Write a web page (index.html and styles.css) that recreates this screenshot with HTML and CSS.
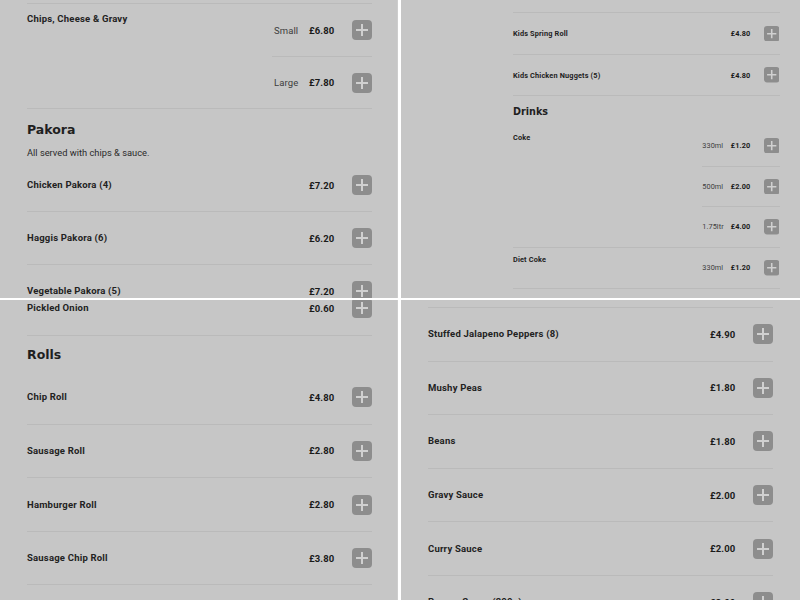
FILE: index.html
```html
<!DOCTYPE html>
<html lang="en">
<head>
<meta charset="utf-8">
<title>Menu</title>
<link rel="stylesheet" href="styles.css">
</head>
<body>
<div class="board">

  <!-- top left -->
  <section class="tile tile--left">
    <div class="menu menu--tl">
      <div class="item item--first item--multi">
        <div class="item__name">Chips, Cheese &amp; Gravy</div>
        <div class="variants">
          <div class="variant"><span class="variant__label">Small</span><span class="price">£6.80</span><button class="add" aria-label="Add"><svg viewBox="0 0 20 20"><rect width="20" height="20" rx="4"/><path d="M10 4v12M4 10h12"/></svg></button></div>
          <div class="variant"><span class="variant__label">Large</span><span class="price">£7.80</span><button class="add" aria-label="Add"><svg viewBox="0 0 20 20"><rect width="20" height="20" rx="4"/><path d="M10 4v12M4 10h12"/></svg></button></div>
        </div>
      </div>
      <div class="section">
        <h2 class="section__title">Pakora</h2>
        <p class="section__desc">All served with chips &amp; sauce.</p>
      </div>
      <div class="item">
        <div class="item__name">Chicken Pakora (4)</div>
        <div class="variants"><div class="variant"><span class="variant__label"></span><span class="price">£7.20</span><button class="add" aria-label="Add"><svg viewBox="0 0 20 20"><rect width="20" height="20" rx="4"/><path d="M10 4v12M4 10h12"/></svg></button></div></div>
      </div>
      <div class="item">
        <div class="item__name">Haggis Pakora (6)</div>
        <div class="variants"><div class="variant"><span class="variant__label"></span><span class="price">£6.20</span><button class="add" aria-label="Add"><svg viewBox="0 0 20 20"><rect width="20" height="20" rx="4"/><path d="M10 4v12M4 10h12"/></svg></button></div></div>
      </div>
      <div class="item">
        <div class="item__name">Vegetable Pakora (5)</div>
        <div class="variants"><div class="variant"><span class="variant__label"></span><span class="price">£7.20</span><button class="add" aria-label="Add"><svg viewBox="0 0 20 20"><rect width="20" height="20" rx="4"/><path d="M10 4v12M4 10h12"/></svg></button></div></div>
      </div>
    </div>
  </section>

  <!-- top right -->
  <section class="tile tile--right">
    <div class="menu menu--tr">
      <div class="item item--first">
        <div class="item__name">Kids Spring Roll</div>
        <div class="variants"><div class="variant"><span class="variant__label"></span><span class="price">£4.80</span><button class="add" aria-label="Add"><svg viewBox="0 0 20 20"><rect width="20" height="20" rx="4"/><path d="M10 4v12M4 10h12"/></svg></button></div></div>
      </div>
      <div class="item">
        <div class="item__name">Kids Chicken Nuggets (5)</div>
        <div class="variants"><div class="variant"><span class="variant__label"></span><span class="price">£4.80</span><button class="add" aria-label="Add"><svg viewBox="0 0 20 20"><rect width="20" height="20" rx="4"/><path d="M10 4v12M4 10h12"/></svg></button></div></div>
      </div>
      <div class="section">
        <h2 class="section__title">Drinks</h2>
      </div>
      <div class="item item--multi">
        <div class="item__name">Coke</div>
        <div class="variants">
          <div class="variant"><span class="variant__label">330ml</span><span class="price">£1.20</span><button class="add" aria-label="Add"><svg viewBox="0 0 20 20"><rect width="20" height="20" rx="4"/><path d="M10 4v12M4 10h12"/></svg></button></div>
          <div class="variant"><span class="variant__label">500ml</span><span class="price">£2.00</span><button class="add" aria-label="Add"><svg viewBox="0 0 20 20"><rect width="20" height="20" rx="4"/><path d="M10 4v12M4 10h12"/></svg></button></div>
          <div class="variant"><span class="variant__label">1.75ltr</span><span class="price">£4.00</span><button class="add" aria-label="Add"><svg viewBox="0 0 20 20"><rect width="20" height="20" rx="4"/><path d="M10 4v12M4 10h12"/></svg></button></div>
        </div>
      </div>
      <div class="item item--multi">
        <div class="item__name">Diet Coke</div>
        <div class="variants">
          <div class="variant"><span class="variant__label">330ml</span><span class="price">£1.20</span><button class="add" aria-label="Add"><svg viewBox="0 0 20 20"><rect width="20" height="20" rx="4"/><path d="M10 4v12M4 10h12"/></svg></button></div>
        </div>
      </div>
    </div>
  </section>

  <!-- bottom left -->
  <section class="tile tile--left">
    <div class="menu menu--bl">
      <div class="item">
        <div class="item__name">Pickled Onion</div>
        <div class="variants"><div class="variant"><span class="variant__label"></span><span class="price">£0.60</span><button class="add" aria-label="Add"><svg viewBox="0 0 20 20"><rect width="20" height="20" rx="4"/><path d="M10 4v12M4 10h12"/></svg></button></div></div>
      </div>
      <div class="section">
        <h2 class="section__title">Rolls</h2>
      </div>
      <div class="item">
        <div class="item__name">Chip Roll</div>
        <div class="variants"><div class="variant"><span class="variant__label"></span><span class="price">£4.80</span><button class="add" aria-label="Add"><svg viewBox="0 0 20 20"><rect width="20" height="20" rx="4"/><path d="M10 4v12M4 10h12"/></svg></button></div></div>
      </div>
      <div class="item">
        <div class="item__name">Sausage Roll</div>
        <div class="variants"><div class="variant"><span class="variant__label"></span><span class="price">£2.80</span><button class="add" aria-label="Add"><svg viewBox="0 0 20 20"><rect width="20" height="20" rx="4"/><path d="M10 4v12M4 10h12"/></svg></button></div></div>
      </div>
      <div class="item">
        <div class="item__name">Hamburger Roll</div>
        <div class="variants"><div class="variant"><span class="variant__label"></span><span class="price">£2.80</span><button class="add" aria-label="Add"><svg viewBox="0 0 20 20"><rect width="20" height="20" rx="4"/><path d="M10 4v12M4 10h12"/></svg></button></div></div>
      </div>
      <div class="item">
        <div class="item__name">Sausage Chip Roll</div>
        <div class="variants"><div class="variant"><span class="variant__label"></span><span class="price">£3.80</span><button class="add" aria-label="Add"><svg viewBox="0 0 20 20"><rect width="20" height="20" rx="4"/><path d="M10 4v12M4 10h12"/></svg></button></div></div>
      </div>
    </div>
  </section>

  <!-- bottom right -->
  <section class="tile tile--right">
    <div class="menu menu--br">
      <div class="item item--first">
        <div class="item__name">Stuffed Jalapeno Peppers (8)</div>
        <div class="variants"><div class="variant"><span class="variant__label"></span><span class="price">£4.90</span><button class="add" aria-label="Add"><svg viewBox="0 0 20 20"><rect width="20" height="20" rx="4"/><path d="M10 4v12M4 10h12"/></svg></button></div></div>
      </div>
      <div class="item">
        <div class="item__name">Mushy Peas</div>
        <div class="variants"><div class="variant"><span class="variant__label"></span><span class="price">£1.80</span><button class="add" aria-label="Add"><svg viewBox="0 0 20 20"><rect width="20" height="20" rx="4"/><path d="M10 4v12M4 10h12"/></svg></button></div></div>
      </div>
      <div class="item">
        <div class="item__name">Beans</div>
        <div class="variants"><div class="variant"><span class="variant__label"></span><span class="price">£1.80</span><button class="add" aria-label="Add"><svg viewBox="0 0 20 20"><rect width="20" height="20" rx="4"/><path d="M10 4v12M4 10h12"/></svg></button></div></div>
      </div>
      <div class="item">
        <div class="item__name">Gravy Sauce</div>
        <div class="variants"><div class="variant"><span class="variant__label"></span><span class="price">£2.00</span><button class="add" aria-label="Add"><svg viewBox="0 0 20 20"><rect width="20" height="20" rx="4"/><path d="M10 4v12M4 10h12"/></svg></button></div></div>
      </div>
      <div class="item">
        <div class="item__name">Curry Sauce</div>
        <div class="variants"><div class="variant"><span class="variant__label"></span><span class="price">£2.00</span><button class="add" aria-label="Add"><svg viewBox="0 0 20 20"><rect width="20" height="20" rx="4"/><path d="M10 4v12M4 10h12"/></svg></button></div></div>
      </div>
      <div class="item">
        <div class="item__name">Pepper Sauce (200g)</div>
        <div class="variants"><div class="variant"><span class="variant__label"></span><span class="price">£2.00</span><button class="add" aria-label="Add"><svg viewBox="0 0 20 20"><rect width="20" height="20" rx="4"/><path d="M10 4v12M4 10h12"/></svg></button></div></div>
      </div>
    </div>
  </section>

</div>
</body>
</html>
```

FILE: styles.css
```css
* { box-sizing: border-box; }

html, body {
  margin: 0;
  padding: 0;
  background: #ffffff;
}

body {
  font-family: Roboto, "Liberation Sans", Arial, sans-serif;
  color: #1f1f1f;
}

.board {
  display: grid;
  grid-template-columns: 398px 399px;
  grid-template-rows: 298px 300px;
  column-gap: 3px;
  row-gap: 2px;
  width: 800px;
  height: 600px;
  background: #ffffff;
}

.tile {
  background: #c6c6c6;
  overflow: hidden;
}

.tile--left {
  border-right: 1px solid #cdcdcd;
}

.menu {
  width: 372px;
  padding-left: 27px;
}

.menu--tl { padding-top: 3px; }
.menu--bl { margin-top: -18px; }
.menu--br { padding-top: 7px; padding-left: 27px; }
.menu--tr {
  zoom: 0.7725;
  width: 490px;
  padding-left: 145px;
  padding-top: 16px;
}

.menu--bl .variant,
.menu--br .variant { height: 52.6px; }

.item {
  display: flex;
  border-bottom: 1px solid #bababa;
}

.item--first { border-top: 1px solid #bababa; }

.item__name {
  flex: 1;
  align-self: center;
  font-size: 9.5px;
  font-weight: 700;
  line-height: 12px;
  letter-spacing: 0.2px;
  color: #222222;
}

.item--multi .item__name {
  align-self: flex-start;
  padding-top: 9px;
}

.menu--tr .item--multi .item__name { padding-top: 10px; }

.variants {
  width: 100px;
  flex: none;
}

.variant {
  display: grid;
  grid-template-columns: 35px 43px 20px;
  align-items: center;
  height: 52px;
  padding-left: 2px;
}

.menu--tr .variant {
  padding-left: 0;
  grid-template-columns: 37px 43px 20px;
  height: 52.5px;
}

.variant + .variant { border-top: 1px solid #bababa; }

.variant__label {
  font-size: 9.5px;
  font-weight: 400;
  color: #3d3d3d;
  letter-spacing: 0.1px;
}

.price {
  font-size: 9.5px;
  font-weight: 700;
  color: #1a1a1a;
  letter-spacing: 0.1px;
}

.add {
  display: block;
  width: 20px;
  height: 20px;
  padding: 0;
  margin: 0;
  border: 0;
  background: none;
}

.add svg {
  display: block;
  width: 20px;
  height: 20px;
}

.add rect { fill: #8d8d8d; }
.add path { stroke: #d0d0d0; stroke-width: 2; fill: none; }

.section {
  padding-top: 13px;
}

.section__title {
  margin: 0 0 8px;
  font-family: "DejaVu Sans", Verdana, sans-serif;
  font-size: 12.5px;
  font-weight: 700;
  line-height: 16px;
  color: #1f1f1f;
}

.menu--bl .section { padding-top: 11.5px; }

.section__desc {
  margin: 0;
  font-size: 9.3px;
  line-height: 13px;
  color: #2a2a2a;
}
```
